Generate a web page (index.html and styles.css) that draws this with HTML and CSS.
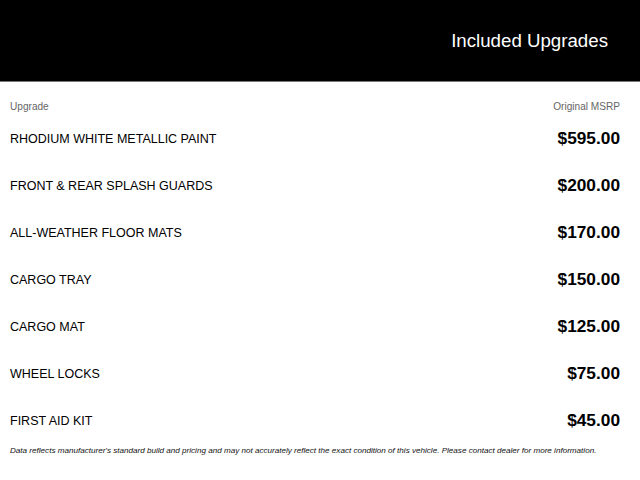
FILE: index.html
```html
<!DOCTYPE html>
<html>
<head>
<meta charset="utf-8">
<link rel="stylesheet" href="styles.css">
</head>
<body>
<header class="top">
  <h1 class="title">Included Upgrades</h1>
</header>
<main class="content">
  <div class="cols">
    <span>Upgrade</span>
    <span>Original MSRP</span>
  </div>
  <ul class="list">
    <li class="row"><span class="name">RHODIUM WHITE METALLIC PAINT</span><span class="price">$595.00</span></li>
    <li class="row"><span class="name">FRONT &amp; REAR SPLASH GUARDS</span><span class="price">$200.00</span></li>
    <li class="row"><span class="name">ALL-WEATHER FLOOR MATS</span><span class="price">$170.00</span></li>
    <li class="row"><span class="name">CARGO TRAY</span><span class="price">$150.00</span></li>
    <li class="row"><span class="name">CARGO MAT</span><span class="price">$125.00</span></li>
    <li class="row"><span class="name">WHEEL LOCKS</span><span class="price">$75.00</span></li>
    <li class="row"><span class="name">FIRST AID KIT</span><span class="price">$45.00</span></li>
  </ul>
  <p class="note">Data reflects manufacturer's standard build and pricing and may not accurately reflect the exact condition of this vehicle. Please contact dealer for more information.</p>
</main>
</body>
</html>
```
FILE: styles.css
```css
html, body {
  margin: 0;
  padding: 0;
  background: #fff;
  font-family: "Liberation Sans", Arial, sans-serif;
  color: #000;
}
.top {
  background: #000;
  height: 82px;
  border-bottom: 1px solid #777;
  display: flex;
  align-items: center;
  justify-content: flex-end;
  padding: 0 32px;
  box-sizing: border-box;
}
.title {
  margin: 0;
  font-size: 18.7px;
  font-weight: normal;
  color: #fff;
}
.content {
  padding: 0 20px 0 10px;
}
.cols {
  display: flex;
  justify-content: space-between;
  font-size: 10.1px;
  color: #666;
  margin-top: 18px;
  height: 13px;
  line-height: 13px;
}
.list {
  list-style: none;
  margin: 0;
  padding: 0;
  margin-top: 2px;
}
.row {
  display: flex;
  justify-content: space-between;
  align-items: center;
  height: 47px;
}
.name {
  font-size: 12.5px;
}
.price {
  font-size: 17.3px;
  font-weight: bold;
}
.note {
  margin: 0;
  margin-top: 2px;
  font-size: 8.1px;
  font-style: italic;
  color: #111;
  white-space: nowrap;
}
```
